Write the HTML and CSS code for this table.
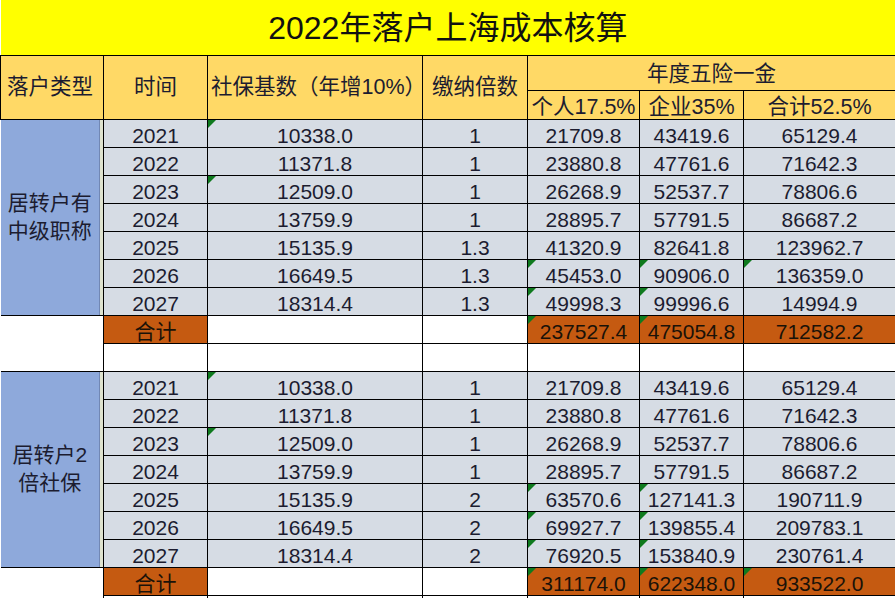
FILE: index.html
```html
<!DOCTYPE html>
<html lang="zh-CN">
<head>
<meta charset="utf-8">
<title>2022年落户上海成本核算</title>
<link rel="stylesheet" href="styles.css">
</head>
<body>
<table class="sheet">
  <colgroup>
    <col class="c1"><col class="c2"><col class="c3"><col class="c4"><col class="c5"><col class="c6"><col class="c7">
  </colgroup>
  <tr class="r-title"><td class="title" colspan="7">2022年落户上海成本核算</td></tr>
  <tr class="r-h1">
    <td class="hd left" rowspan="2">落户类型</td>
    <td class="hd" rowspan="2">时间</td>
    <td class="hd left base" rowspan="2">社保基数（年增10%<span class="half">）</span></td>
    <td class="hd left pad" rowspan="2">缴纳倍数</td>
    <td class="hd top" colspan="3">年度五险一金</td>
  </tr>
  <tr class="r-h2">
    <td class="hd sub">个人17.5%</td>
    <td class="hd sub">企业35%</td>
    <td class="hd sub">合计52.5%</td>
  </tr>

  <tr class="r"><td class="grp" rowspan="7">居转户有<br>中级职称</td><td class="d">2021</td><td class="d tri">10338.0</td><td class="d">1</td><td class="d">21709.8</td><td class="d">43419.6</td><td class="d">65129.4</td></tr>
  <tr class="r"><td class="d">2022</td><td class="d">11371.8</td><td class="d">1</td><td class="d">23880.8</td><td class="d">47761.6</td><td class="d">71642.3</td></tr>
  <tr class="r"><td class="d">2023</td><td class="d tri">12509.0</td><td class="d">1</td><td class="d">26268.9</td><td class="d">52537.7</td><td class="d">78806.6</td></tr>
  <tr class="r"><td class="d">2024</td><td class="d">13759.9</td><td class="d">1</td><td class="d">28895.7</td><td class="d">57791.5</td><td class="d">86687.2</td></tr>
  <tr class="r"><td class="d">2025</td><td class="d">15135.9</td><td class="d">1.3</td><td class="d">41320.9</td><td class="d">82641.8</td><td class="d">123962.7</td></tr>
  <tr class="r"><td class="d">2026</td><td class="d">16649.5</td><td class="d">1.3</td><td class="d tri">45453.0</td><td class="d tri">90906.0</td><td class="d tri">136359.0</td></tr>
  <tr class="r"><td class="d">2027</td><td class="d">18314.4</td><td class="d">1.3</td><td class="d tri">49998.3</td><td class="d tri">99996.6</td><td class="d">14994.9</td></tr>
  <tr class="r"><td class="blank0"></td><td class="sum">合计</td><td class="w"></td><td class="w"></td><td class="sum tri">237527.4</td><td class="sum tri">475054.8</td><td class="sum">712582.2</td></tr>
  <tr class="r"><td class="blank0"></td><td class="w"></td><td class="w"></td><td class="w"></td><td class="w"></td><td class="w"></td><td class="w"></td></tr>

  <tr class="r"><td class="grp" rowspan="7">居转户2<br>倍社保</td><td class="d">2021</td><td class="d tri">10338.0</td><td class="d">1</td><td class="d">21709.8</td><td class="d">43419.6</td><td class="d">65129.4</td></tr>
  <tr class="r"><td class="d">2022</td><td class="d">11371.8</td><td class="d">1</td><td class="d">23880.8</td><td class="d">47761.6</td><td class="d">71642.3</td></tr>
  <tr class="r"><td class="d">2023</td><td class="d tri">12509.0</td><td class="d">1</td><td class="d">26268.9</td><td class="d">52537.7</td><td class="d">78806.6</td></tr>
  <tr class="r"><td class="d">2024</td><td class="d">13759.9</td><td class="d">1</td><td class="d">28895.7</td><td class="d">57791.5</td><td class="d">86687.2</td></tr>
  <tr class="r"><td class="d">2025</td><td class="d">15135.9</td><td class="d">2</td><td class="d tri">63570.6</td><td class="d tri">127141.3</td><td class="d">190711.9</td></tr>
  <tr class="r"><td class="d">2026</td><td class="d">16649.5</td><td class="d">2</td><td class="d tri">69927.7</td><td class="d tri">139855.4</td><td class="d">209783.1</td></tr>
  <tr class="r"><td class="d">2027</td><td class="d">18314.4</td><td class="d">2</td><td class="d tri">76920.5</td><td class="d tri">153840.9</td><td class="d">230761.4</td></tr>
  <tr class="r"><td class="blank0"></td><td class="sum">合计</td><td class="w"></td><td class="w"></td><td class="sum tri">311174.0</td><td class="sum tri">622348.0</td><td class="sum tri">933522.0</td></tr>
  <tr class="r"><td class="blank0"></td><td class="w"></td><td class="w"></td><td class="w"></td><td class="w"></td><td class="w"></td><td class="w"></td></tr>
</table>
</body>
</html>
```

FILE: styles.css
```css
html, body {
  margin: 0;
  padding: 0;
  background: #ffffff;
}

body {
  font-family: "Liberation Sans", "Noto Sans CJK SC", sans-serif;
  color: #1c1c30;
  overflow: hidden;
}

.sheet {
  width: 895px;
  table-layout: fixed;
  border-collapse: collapse;
  border-spacing: 0;
  font-size: 21px;
}

.c1 { width: 103px; }
.c2 { width: 104px; }
.c3 { width: 215px; }
.c4 { width: 105px; }
.c5 { width: 112px; }
.c6 { width: 104px; }
.c7 { width: 152px; }

td {
  padding: 0;
  border: 1px solid #000;
  text-align: center;
  white-space: nowrap;
  overflow: hidden;
  position: relative;
  line-height: 24px;
}

.r-title { height: 55px; }
.title {
  background: #ffff00;
  font-size: 32px;
  color: #111;
  border-top: none;
  border-left: none;
  vertical-align: middle;
  padding-top: 2px;
}

.r-h1 { height: 35px; }
.r-h2 { height: 29px; }

.hd {
  background: #ffd966;
  color: #1c1c30;
  font-size: 21.5px;
}
.hd.left { text-align: left; padding-left: 6px; }
.hd.left.base { padding-left: 3px; }
.hd.left.pad { padding-left: 9px; }
.hd.top { vertical-align: middle; padding-top: 2px; }
.hd.sub { vertical-align: bottom; line-height: 23px; }

.half {
  font-feature-settings: "halt" 1;
}

.r { height: 28px; }

.d {
  background: #d6dce4;
  vertical-align: bottom;
  line-height: 23px;
}

.grp {
  background: #8ea9db;
  line-height: 28px;
  vertical-align: middle;
  text-align: center;
  padding-right: 4px;
  border-left: none;
  box-shadow: inset -3px 0 0 #dfe3cf, inset -4px 0 0 #7187b4;
}

.sum {
  background: #c55a11;
  vertical-align: bottom;
  line-height: 23px;
  color: #1a1208;
}

.w {
  background: #ffffff;
}

.blank0 {
  background: #ffffff;
  border-left: none;
  border-top: none;
  border-bottom: none;
}

.tri::before {
  content: "";
  position: absolute;
  left: 0;
  top: 0;
  width: 0;
  height: 0;
  border-top: 8px solid #0f7a1e;
  border-right: 8px solid transparent;
}
```
